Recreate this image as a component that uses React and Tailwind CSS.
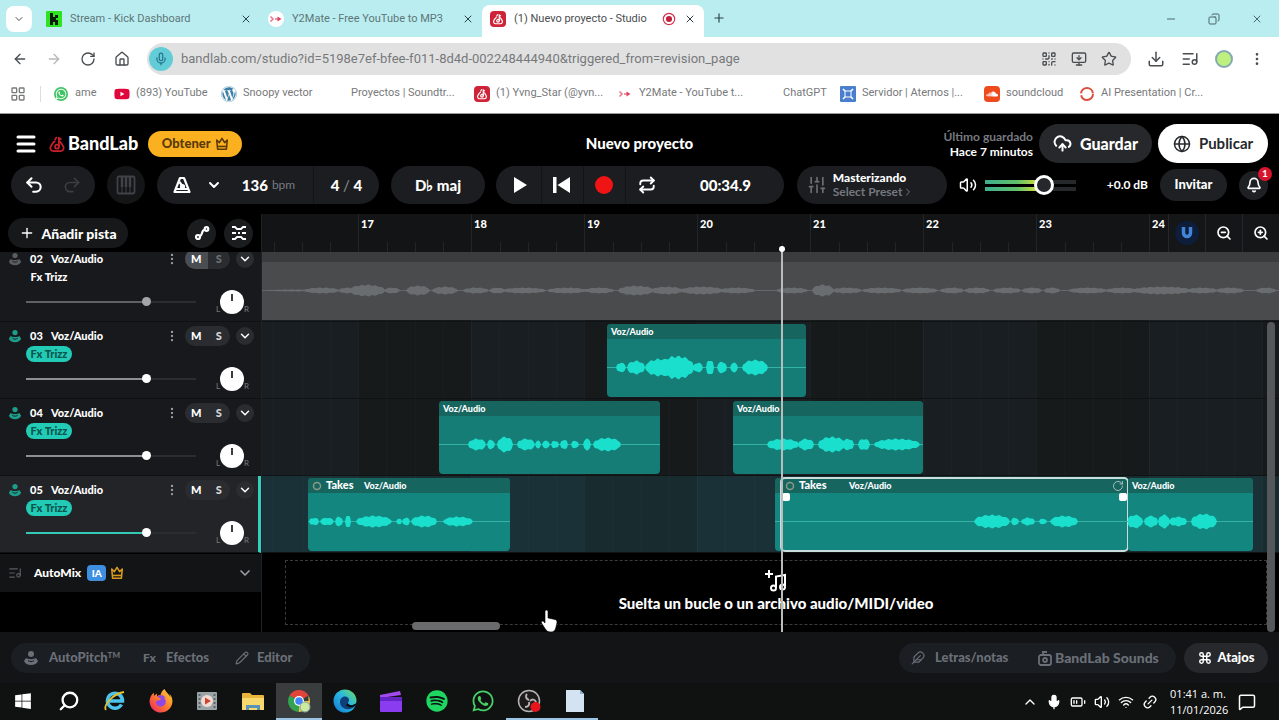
import React, { useState } from "react";
import {
  ArrowLeft, ArrowRight, Bell, ChevronDown, ChevronRight, ChevronUp, CloudUpload, Command, Copy, Download,
  EllipsisVertical, Feather, Globe, House, LayoutGrid, ListMusic, Menu, MessageSquare, Minus, MonitorDown, Pencil,
  Plus, QrCode, Redo2, Repeat, RotateCw, Search, SlidersVertical, Star, Undo2, Volume2, X, ZoomIn, ZoomOut, Mic, Wifi,
  BatteryMedium, Link2,
} from "lucide-react";
import { FaFirefoxBrowser, FaSoundcloud, FaSpotify, FaWhatsapp, FaWindows, FaWordpress, FaYoutube } from "react-icons/fa";

const TABS = [
  { icon: "kick", title: "Stream - Kick Dashboard" },
  { icon: "y2", title: "Y2Mate - Free YouTube to MP3" },
  { icon: "bandlab", title: "(1) Nuevo proyecto - Studio", active: true },
];

const BOOKMARKS = [
  { icon: "whatsapp", label: "ame", width: "w-[61px]" },
  { icon: "youtube", label: "(893) YouTube", width: "w-[107px]" },
  { icon: "wordpress", label: "Snoopy vector", width: "w-[108px]" },
  { icon: "none", label: "Proyectos | Soundtr...", width: "w-[145px]" },
  { icon: "bandlab", label: "(1) Yvng_Star (@yvn...", width: "w-[143px]" },
  { icon: "y2", label: "Y2Mate - YouTube t...", width: "w-[144px]" },
  { icon: "none", label: "ChatGPT", width: "w-[79px]" },
  { icon: "aternos", label: "Servidor | Aternos |...", width: "w-[144px]" },
  { icon: "soundcloud", label: "soundcloud", width: "w-[95px]" },
  { icon: "ai", label: "AI Presentation | Cr...", width: "w-[140px]" },
];

const BARS = [16, 17, 18, 19, 20, 21, 22, 23, 24, 25];

// blobs: [center, half width, amplitude], measured from the left edge of the clip
const TRACKS = [
  { id: "02", muted: true, clips: [] },
  {
    id: "03",
    clips: [
      { left: 345, width: 199, blobs: [[14, 5, 5], [29, 9, 7], [53, 15, 9], [70, 17, 12], [91, 5, 5], [103, 4, 8], [115, 5, 6], [127, 4, 5], [148, 13, 8]] },
    ],
  },
  {
    id: "04",
    clips: [
      { left: 177, width: 221, blobs: [[38, 9, 6], [52, 4, 5], [66, 8, 8], [87, 9, 6], [99, 3, 4], [107, 4, 4], [116, 4, 4], [125, 4, 5], [136, 4, 4], [148, 4, 6], [168, 14, 7]] },
      { left: 471, width: 190, blobs: [[50, 16, 6], [73, 8, 6], [99, 14, 8], [115, 6, 6], [131, 6, 6], [164, 23, 6]] },
    ],
  },
  {
    id: "05",
    selected: true,
    clips: [
      { left: 46, width: 202, takes: true, blobs: [[6, 5, 4], [19, 7, 4], [31, 4, 5], [40, 3, 7], [66, 18, 6], [91, 3, 3], [98, 4, 4], [116, 13, 6], [150, 15, 5]] },
      { left: 513, width: 10, plain: true, blobs: [] },
      { left: 519, width: 347, takes: true, selected: true, blobs: [[211, 18, 7], [234, 4, 4], [247, 7, 4], [262, 4, 3], [283, 14, 6]] },
      { left: 866, width: 125, blobs: [[7, 8, 7], [23, 7, 6], [36, 6, 7], [50, 9, 5], [76, 13, 8]] },
    ],
  },
];

const MUTED_BLOBS = [
  [30, 25, 1], [60, 18, 3], [85, 8, 3], [105, 18, 6], [130, 8, 3], [156, 12, 5], [183, 13, 4], [214, 13, 3],
  [235, 8, 3], [262, 22, 3], [305, 20, 3], [337, 15, 3], [374, 18, 5], [405, 16, 4], [440, 22, 4], [475, 18, 3],
  [530, 16, 3], [561, 11, 6], [585, 15, 3], [620, 20, 3], [658, 18, 3], [690, 12, 3], [715, 13, 3], [745, 14, 3],
  [770, 10, 3], [790, 8, 3], [826, 20, 3], [860, 16, 3], [900, 30, 4], [940, 16, 3], [968, 14, 3], [1004, 10, 3],
];

const wavePath = (blobs, mid) => {
  let d = "";
  blobs.forEach(([cx, hw, amp]) => {
    const top = [];
    const bottom = [];
    for (let x = -hw; x <= hw; x += 1) {
      const env = Math.pow(1 - Math.pow(Math.abs(x) / hw, 2), 0.5);
      const wobble = 0.9 + 0.1 * Math.sin((cx + x) * 0.9);
      const h = amp * env * wobble;
      top.push(`${cx + x},${(mid - h).toFixed(1)}`);
      bottom.unshift(`${cx + x},${(mid + h).toFixed(1)}`);
    }
    d += `M${top.join("L")}L${bottom.join("L")}Z`;
  });
  return d;
};

const BandLabMark = ({ className }) => (
  <svg viewBox="0 0 24 24" className={className} fill="none" stroke="currentColor" strokeWidth="2.4" strokeLinecap="round">
    <path d="M9 8.5c-2.600.9-2.900 3.200-5.300 6.700C2 18.200 4 21.500 7.500 21.500h9c3.500 0 5.500-3.300 3.800-6.300-2.400-3.500-2.700-5.800-5.300-6.700" />
    <circle cx="12" cy="15.500" r="2.600" />
    <path d="M14.500 15V4l2.500 1.500M11 3.500 9.500 6" />
  </svg>
);

const Crown = ({ className }) => (
  <svg viewBox="0 0 16 16" className={className} fill="none" stroke="currentColor" strokeWidth="1.800" strokeLinejoin="round">
    <path d="M2 3.500 5 6.500 8 1.500l3 5 3-3-1 10.500H3z" />
    <path d="M3.500 10.800h9" />
  </svg>
);

const VoiceIcon = ({ className }) => (
  <svg viewBox="0 0 16 16" className={className} fill="currentColor">
    <circle cx="8" cy="4" r="3" />
    <path d="M3 8c2 1.500 8 1.500 10 0l2 3c-1 2.500-3.500 4-7 4s-6-1.500-7-4z" />
    <path d="M5 10.500c2 1.500 4 1.500 6 0" fill="none" stroke="#17191c" />
  </svg>
);

const SiteIcon = ({ name }) => {
  if (name === "kick")
    return (
      <svg viewBox="0 0 16 16" className="size-4 shrink-0">
        <rect width="16" height="16" rx="1" fill="#2fe321" />
        <path d="M4 2h3v4h2V4h3v3h-2v2h2v5H9v-3H7v3H4z" fill="#0b1c08" />
      </svg>
    );
  if (name === "bandlab")
    return (
      <span className="flex size-4 shrink-0 items-center justify-center rounded-sm bg-[#cf2438] text-white">
        <BandLabMark className="size-3" />
      </span>
    );
  if (name === "y2")
    return (
      <span className="flex size-4 shrink-0 items-center justify-center rounded-full bg-white">
        <svg viewBox="0 0 16 16" className="size-4">
          <path d="M2.500 5.500 5 8l-2.500 2.500M7 8h3" stroke="#e8768c" strokeWidth="1.500" fill="none" />
          <path d="m9.500 5.500 4 2.500-4 2.500z" fill="#e0405c" />
        </svg>
      </span>
    );
  if (name === "whatsapp")
    return (
      <span className="flex size-4 shrink-0 items-center justify-center">
        <span className="flex size-3.5 items-center justify-center rounded-full bg-[#3fc463]">
          <FaWhatsapp className="size-3 text-white" />
        </span>
      </span>
    );
  if (name === "youtube") return <FaYoutube className="size-4 shrink-0 text-[#e0083a]" />;
  if (name === "wordpress") return <FaWordpress className="size-4 shrink-0 text-[#3d7fa8]" />;
  if (name === "aternos")
    return (
      <svg viewBox="0 0 16 16" className="size-4 shrink-0">
        <rect width="16" height="16" rx="1" fill="#4a7fd0" />
        <path d="m3 3 10 10M13 3 3 13" stroke="#fff" strokeWidth="1.500" />
        <rect x="5" y="5" width="6" height="6" rx="1" fill="#4a7fd0" stroke="#fff" />
      </svg>
    );
  if (name === "soundcloud")
    return (
      <span className="flex size-4 shrink-0 items-center justify-center rounded-sm bg-[#ee4a1c]">
        <FaSoundcloud className="size-3 text-white" />
      </span>
    );
  if (name === "ai")
    return (
      <svg viewBox="0 0 16 16" className="size-4 shrink-0" fill="none" strokeWidth="2">
        <circle cx="8" cy="8" r="6" stroke="#d9503f" strokeDasharray="17 2" />
      </svg>
    );
  return <span className="size-4 shrink-0" />;
};

const BrowserChrome = () => (
  <div className="bg-white font-['Roboto','Open_Sans',sans-serif] text-[#4a4d50]">
    <div className="flex h-[37px] items-end bg-[#baedf0]">
      <button aria-label="Buscar pestañas" className="mx-1.5 mb-[5px] flex size-[26px] items-center justify-center rounded-lg bg-white">
        <ChevronDown className="size-3" />
      </button>
      {TABS.map((t) => (
        <div
          key={t.title}
          className={`flex h-8 w-[222px] items-center gap-2 rounded-t-lg px-2 pb-1 ${t.active ? "bg-white" : "text-[#5d7679]"}`}
        >
          <SiteIcon name={t.icon} />
          <span className="flex-1 overflow-hidden text-[11px] whitespace-nowrap">{t.title}</span>
          {t.active && (
            <svg viewBox="0 0 16 16" className="size-3.5 shrink-0">
              <circle cx="8" cy="8" r="6.500" fill="none" stroke="#d2344e" strokeWidth="1.300" />
              <circle cx="8" cy="8" r="3.500" fill="#c2203c" />
            </svg>
          )}
          <button aria-label="Cerrar pestaña" className="text-[#2c4144]">
            <X className="size-3" />
          </button>
        </div>
      ))}
      <button aria-label="Nueva pestaña" className="mb-3 ml-2 text-[#2c4144]">
        <Plus className="size-3.5" />
      </button>
      <div className="mr-4 mb-3 ml-auto flex items-center gap-[31px] text-[#4b6669]">
        <button aria-label="Minimizar"><Minus className="size-3" /></button>
        <button aria-label="Restaurar"><Copy className="size-3 -scale-x-100" /></button>
        <button aria-label="Cerrar"><X className="size-3" /></button>
      </div>
    </div>

    <div className="flex h-[43px] items-center pr-3.5 pl-3">
      <div className="flex w-[135px] items-center gap-[18px]">
        <button aria-label="Atrás"><ArrowLeft className="size-4" /></button>
        <button aria-label="Adelante" className="text-[#b6b8ba]"><ArrowRight className="size-4" /></button>
        <button aria-label="Recargar"><RotateCw className="size-4" /></button>
        <button aria-label="Inicio"><House className="size-4" /></button>
      </div>
      <div className="flex h-8 flex-1 items-center rounded-full bg-[#e1e1e2] pr-3.5 pl-0.5">
        <span className="mr-2 flex size-6 items-center justify-center rounded-full bg-[#62cdd6] text-[#246f87]">
          <Mic className="size-3.5" />
        </span>
        <input
          aria-label="Dirección"
          className="min-w-0 flex-1 bg-transparent text-[13px] text-[#77797b] outline-none"
          defaultValue="bandlab.com/studio?id=5198e7ef-bfee-f011-8d4d-002248444940&triggered_from=revision_page"
        />
        <div className="flex items-center gap-3.5">
          <button aria-label="Código QR"><QrCode className="size-4" /></button>
          <button aria-label="Instalar"><MonitorDown className="size-4" /></button>
          <button aria-label="Favorito"><Star className="size-4" /></button>
        </div>
      </div>
      <div className="ml-4 flex items-center gap-4">
        <button aria-label="Descargas"><Download className="size-[18px]" /></button>
        <button aria-label="Multimedia"><ListMusic className="size-[18px]" /></button>
        <button aria-label="Perfil" className="size-[18px] rounded-full border-2 border-[#83a7b4] bg-[#bdf07c]" />
        <button aria-label="Menú"><EllipsisVertical className="size-4" /></button>
      </div>
    </div>

    <nav className="flex h-[34px] items-center overflow-hidden border-b border-[#9a9a9a] pb-1.5 pl-2.5 text-[11px] text-[#77797b]">
      <LayoutGrid className="mr-3.5 size-4 shrink-0" />
      <span className="mr-3 h-4 w-px shrink-0 bg-[#dcdfe0]" />
      {BOOKMARKS.map((b) => (
        <a key={b.label} href="#" className={`flex shrink-0 items-center gap-1.5 whitespace-nowrap ${b.width}`}>
          <SiteIcon name={b.icon} />
          {b.label}
        </a>
      ))}
    </nav>
  </div>
);

const StudioHeader = () => (
  <header className="flex flex-col gap-[3px] bg-black py-2.5">
    <div className="flex h-[39px] items-center px-[11px]">
      <div className="flex flex-1 items-center">
        <button aria-label="Menú principal" className="mr-2.5 ml-[3px]">
          <Menu className="size-6" strokeWidth={3} />
        </button>
        <a href="#" className="mr-2.5 flex items-center gap-0.5 text-[18px] font-black">
          <BandLabMark className="size-[18px] text-[#c8202c]" />
          BandLab
        </a>
        <button className="flex h-[26px] w-[94px] items-center justify-center gap-1 rounded-full bg-[#fbb01f] text-[13px] font-black text-[#5a3a08]">
          Obtener
          <Crown className="size-3.5" />
        </button>
      </div>
      <h1 className="text-[15px] font-black">Nuevo proyecto</h1>
      <div className="flex flex-1 items-center justify-end gap-1.5">
        <div className="text-right text-[12px] leading-[15px] font-bold">
          <div className="text-[#777a80]">Último guardado</div>
          <div>Hace 7 minutos</div>
        </div>
        <button className="flex h-[39px] w-[113px] items-center justify-center gap-2 rounded-full bg-[#26282b] text-[16px] font-black">
          <CloudUpload className="size-[19px]" strokeWidth={2.5} />
          Guardar
        </button>
        <button className="flex h-[39px] w-[110px] items-center justify-center gap-2 rounded-full bg-white text-[15px] font-bold text-[#26282b]">
          <Globe className="size-[18px]" />
          Publicar
        </button>
      </div>
    </div>

    <div className="flex h-[38px] items-center px-[11px]">
      <div className="flex flex-1 items-center gap-3">
        <div className="flex h-[38px] w-[84px] items-center justify-around rounded-full bg-[#1b1d20] px-1">
          <button aria-label="Deshacer"><Undo2 className="size-5" strokeWidth={2.5} /></button>
          <button aria-label="Rehacer" className="text-[#3b3e42]"><Redo2 className="size-5" /></button>
        </div>
        <button aria-label="Teclado" className="flex size-[38px] items-center justify-center rounded-full bg-[#141517] text-[#3f4246]">
          <svg viewBox="0 0 20 20" className="size-5" fill="none" stroke="currentColor" strokeWidth="1.800">
            <rect x="1.500" y="1.500" width="17" height="17" rx="1.500" />
            <path d="M6 2v10M10 2v10M14 2v10" strokeWidth="2.500" />
            <path d="M6 12v6M10 12v6M14 12v6" strokeWidth="1" />
          </svg>
        </button>
        <div className="flex h-[38px] w-[222px] items-center rounded-full bg-[#1b1d20]">
          <button aria-label="Metrónomo" className="flex w-[47px] justify-end pr-3">
            <svg viewBox="0 0 20 20" className="size-5 shrink-0" fill="none" stroke="currentColor" strokeWidth="2.200" strokeLinejoin="round">
              <path d="M8 3h4l5.500 14h-15z" />
              <path d="M4 14h12M11 12 7.500 7" />
              <circle cx="10.500" cy="11.500" r="1.500" />
            </svg>
          </button>
          <button aria-label="Opciones de metrónomo" className="flex w-5 justify-center">
            <ChevronDown className="size-4 shrink-0" strokeWidth={3} />
          </button>
          <div className="flex h-full flex-1 items-center justify-center gap-1 text-[15px] font-black">
            136 <span className="text-[12px] font-normal text-[#777b82]">bpm</span>
          </div>
          <div className="flex h-full w-[66px] items-center justify-center border-l border-[#131416] text-[15px] font-black">
            4&nbsp;<span className="font-normal text-[#8b8e94]">/</span>&nbsp;4
          </div>
        </div>
        <button className="h-[38px] w-[94px] rounded-full bg-[#1b1d20] text-[15px] font-black">D♭ maj</button>
      </div>

      <div className="flex h-[38px] w-[288px] items-center rounded-full bg-[#1b1d20] pl-1">
        <button aria-label="Reproducir" className="flex h-full w-[42px] items-center justify-center border-r border-[#131416]">
          <svg viewBox="0 0 16 16" className="size-4" fill="currentColor"><path d="M2 0v16l13-8z" /></svg>
        </button>
        <button aria-label="Volver al inicio" className="flex h-full w-[42px] items-center justify-center border-r border-[#131416]">
          <svg viewBox="0 0 18 16" className="h-4 w-[18px]" fill="currentColor"><path d="M0 0h3.500v16H0zM17 0v16L4.500 8z" /></svg>
        </button>
        <button aria-label="Grabar" className="flex h-full w-[42px] items-center justify-center border-r border-[#131416]">
          <span className="size-[18px] rounded-full bg-[#f01414]" />
        </button>
        <button aria-label="Repetir" className="flex h-full w-[42px] items-center justify-center">
          <Repeat className="size-[18px]" strokeWidth={2.5} />
        </button>
        <div className="flex-1 text-center text-[15px] font-black">00:34.9</div>
      </div>

      <div className="flex flex-1 items-center justify-end">
        <button className="mr-3 flex h-[38px] w-[150px] items-center gap-1.5 rounded-full bg-[#1b1d20] pl-2.5 text-left text-[12px] leading-[14px] font-bold">
          <SlidersVertical className="size-5 text-[#6b6e74]" />
          <span>
            <span className="block font-black">Masterizando</span>
            <span className="flex items-center text-[#75787e]">Select Preset <ChevronRight className="size-3" /></span>
          </span>
        </button>
        <Volume2 className="mr-2 size-[18px]" />
        <div className="relative mr-[31px] flex h-5 w-[91px] flex-col justify-center gap-[3px]">
          <span className="h-1 w-full bg-[linear-gradient(90deg,#3fae8d_0%,#5fc06a_35%,#d9e23a_60%,#26282b_62%)]" />
          <span className="h-1 w-full bg-[linear-gradient(90deg,#3fae8d_0%,#5fc06a_35%,#d9e23a_60%,#26282b_62%)]" />
          <input
            type="range"
            aria-label="Volumen principal"
            defaultValue="69"
            className="absolute inset-0 appearance-none bg-transparent [&::-webkit-slider-thumb]:size-5 [&::-webkit-slider-thumb]:appearance-none [&::-webkit-slider-thumb]:rounded-full [&::-webkit-slider-thumb]:border-3 [&::-webkit-slider-thumb]:border-white [&::-webkit-slider-thumb]:bg-[#26282b]"
          />
        </div>
        <span className="mr-3 text-[12px] font-bold">+0.0 dB</span>
        <button className="mr-3 h-8 w-[67px] rounded-full bg-[#1e2023] text-[13px] font-black">Invitar</button>
        <button aria-label="Notificaciones" className="relative flex size-[29px] items-center justify-center rounded-full bg-[#1e2023]">
          <Bell className="size-4" strokeWidth={2.5} />
          <span className="absolute -top-1 -right-1 flex size-[14px] items-center justify-center rounded-full bg-[#d8152c] text-[10px] font-bold">1</span>
        </button>
      </div>
    </div>
  </header>
);

const TrackHeader = ({ track }) => {
  const [volume, setVolume] = useState(72);
  const { id, muted, selected } = track;
  const fill = selected ? "#35c9b5" : muted ? "#5f6265" : "#8d9093";

  return (
    <div className={`flex h-[77px] w-full shrink-0 flex-col border-b border-[#0f1011] pt-1 ${selected ? "border-r-3 border-r-[#35d0bd] bg-[#222427]" : "bg-[#17191c]"}`}>
      <div className="flex h-5 items-center pl-2 text-[11px] font-black">
        <VoiceIcon className={`mr-2 size-3.5 ${muted ? "text-[#5a5d60]" : "text-[#1f9d8c]"}`} />
        <span className="w-[21px]">{id}</span>
        <span className="w-[114px]">Voz/Audio</span>
        <button aria-label={`Opciones de pista ${id}`} className="mr-1.5 text-[#9a9da0]">
          <EllipsisVertical className="size-3.5" />
        </button>
        <div className="mr-1.5 flex h-5 w-[45px] overflow-hidden rounded-full bg-[#2a2c30]">
          <button aria-label={`Silenciar pista ${id}`} className={`flex-1 ${muted ? "bg-[#4a4d52]" : ""}`}>M</button>
          <button aria-label={`Solo pista ${id}`} className={`flex-1 ${muted ? "text-[#6d7075]" : "text-[#d4d6d8]"}`}>S</button>
        </div>
        <button aria-label={`Expandir pista ${id}`} className="flex size-[18px] items-center justify-center rounded-full bg-[#2a2c30]">
          <ChevronDown className="size-3.5" strokeWidth={2.5} />
        </button>
      </div>
      <button
        className={`ml-[26px] h-4 w-[46px] rounded-full text-[11px] leading-4 font-black ${muted ? "text-white" : "bg-[#21cbb5] text-[#0d544b]"}`}
      >
        Fx Trizz
      </button>
      <div className="flex h-[33px] items-center pl-[26px]">
        <input
          type="range"
          aria-label={`Volumen de pista ${id}`}
          value={volume}
          onChange={(e) => setVolume(Number(e.target.value))}
          style={{ backgroundImage: `linear-gradient(90deg, ${fill} ${volume}%, #2b2d30 ${volume}%)` }}
          className={`mr-5 h-3 w-[170px] appearance-none bg-[length:100%_2px] bg-center bg-no-repeat [&::-webkit-slider-thumb]:size-[9px] [&::-webkit-slider-thumb]:appearance-none [&::-webkit-slider-thumb]:rounded-full ${muted ? "[&::-webkit-slider-thumb]:bg-[#a3a5a7]" : "[&::-webkit-slider-thumb]:bg-white"}`}
        />
        <div className="flex items-end text-[8px] leading-[10px] text-[#77797c]">
          <span className="w-1">L</span>
          <button aria-label={`Panorama de pista ${id}`} className="flex size-6 justify-center rounded-full bg-white pt-1">
            <span className="h-[7px] w-0.5 bg-[#3a3c3e]" />
          </button>
          <span>R</span>
        </div>
      </div>
    </div>
  );
};

// Bars are 113px wide, the view starts 17px into bar 16
const Grid = () => (
  <div className="absolute inset-0 -ml-[17px] flex overflow-hidden">
    {BARS.map((bar) => (
      <div key={bar} className={`grid w-[113px] shrink-0 grid-cols-4 ${bar % 2 ? "bg-[#00000012]" : "bg-[#20406014]"}`}>
        {[0, 1, 2, 3].map((beat) => (
          <span key={beat} className={`border-l ${beat ? "border-[#ffffff05]" : "border-[#ffffff08]"}`} />
        ))}
      </div>
    ))}
  </div>
);

const Ruler = () => (
  <div className="flex h-[38px] bg-[#121415]">
    <div className="flex min-w-0 flex-1 overflow-hidden">
      <div className="-ml-[17px] flex">
        {BARS.slice(0, 9).map((bar, i) => (
          <div key={bar} className="flex w-[113px] shrink-0 flex-col justify-between border-l border-[#222426]">
            <span className="h-5 pt-0.5 pl-0.5 text-[11px] leading-4 font-black">{i > 0 && bar}</span>
            <div className="grid h-2.5 grid-cols-4">
              {[0, 1, 2, 3].map((beat) => (
                <span key={beat} className={`border-l ${beat ? "border-[#222426]" : "border-transparent"}`} />
              ))}
            </div>
          </div>
        ))}
      </div>
    </div>
    {[
      { label: "Ajustar a la cuadrícula", icon: "snap" },
      { label: "Alejar", icon: "out" },
      { label: "Acercar", icon: "in" },
    ].map((c) => (
      <button key={c.icon} aria-label={c.label} className="flex w-[37px] shrink-0 items-center justify-center border-l border-[#25272a] bg-[#151617]">
        {c.icon === "snap" && (
          <span className="flex size-6 items-center justify-center rounded-full bg-[#0d1d3a]">
            <svg viewBox="0 0 14 14" className="size-3.5" fill="none" stroke="#4285d6" strokeWidth="3.500">
              <path d="M3.500 1v6a3.500 3.500 0 0 0 7 0V1" />
            </svg>
          </span>
        )}
        {c.icon === "out" && <ZoomOut className="size-4" strokeWidth={2.5} />}
        {c.icon === "in" && <ZoomIn className="size-4" strokeWidth={2.5} />}
      </button>
    ))}
  </div>
);

const Clip = ({ clip, active }) => (
  <div
    className={`absolute top-0.5 h-[73px] overflow-hidden rounded-sm ${active ? "bg-[#13877f]" : "bg-[#157c76]"} ${clip.selected ? "outline-2 -outline-offset-1 outline-[#c9dedb]" : ""}`}
    style={{ left: clip.left, width: clip.width }}
  >
    <div className="flex h-[15px] items-center bg-[#16655f] pl-1 text-[9px] font-black">
      {clip.takes && (
        <>
          <svg viewBox="0 0 10 10" className="mr-1 size-2.5" fill="none" stroke="#8a9a86" strokeWidth="1.500">
            <circle cx="5" cy="5" r="3.500" />
          </svg>
          <span className={`text-[11px] ${clip.selected ? "w-[50px]" : "w-[38px]"}`}>Takes</span>
        </>
      )}
      {!clip.plain && <span>Voz/Audio</span>}
      {clip.selected && <RotateCw className="mr-1 ml-auto size-3 text-[#a5bdb9]" />}
    </div>
    {clip.selected && (
      <div className="flex justify-between px-px">
        <span className="size-2 rounded-xs bg-white" />
        <span className="size-2 rounded-xs bg-white" />
      </div>
    )}
    <svg width={clip.width} height="73" className="absolute top-0 left-0">
      <path d={`M0 43.500H${clip.width}`} stroke="#32b3a6" />
      <path d={wavePath(clip.blobs, 43.5)} fill="#1adfcd" />
    </svg>
  </div>
);

const Lane = ({ track }) => (
  <div className={`relative h-[77px] w-full shrink-0 overflow-hidden border-b border-[#101213] ${track.selected ? "bg-[#1a3033]" : "bg-[#181c1d]"}`}>
    <Grid />
    {track.muted && (
      <div className="absolute inset-x-0 top-0.5 h-[73px] bg-[#494b4d]">
        <div className="h-[15px] bg-[#3b3c3e]" />
        <svg width="100%" height="73" className="absolute top-0 left-0">
          <path d="M0 43.500H3000" stroke="#646769" />
          <path d={wavePath(MUTED_BLOBS, 43.5)} fill="#6a6d6f" />
        </svg>
      </div>
    )}
    {track.clips.map((clip) => (
      <Clip key={clip.left} clip={clip} active={track.selected} />
    ))}
  </div>
);

const Editor = () => (
  <main className="flex flex-1 bg-black">
    <aside className="flex w-[262px] shrink-0 flex-col border-r border-[#1f2123]">
      <div className="flex h-[38px] items-center gap-2 pr-2 pl-2">
        <button className="mr-auto flex h-[30px] w-[120px] items-center justify-center gap-1.5 rounded-full bg-[#17181a] text-[14px] font-black">
          <Plus className="size-4" />
          Añadir pista
        </button>
        <button aria-label="Automatización" className="flex size-[29px] items-center justify-center rounded-full bg-[#1b1c1e]">
          <svg viewBox="0 0 16 16" className="size-4" fill="none" stroke="currentColor" strokeWidth="2.200">
            <circle cx="4" cy="12" r="2" />
            <circle cx="12.500" cy="4" r="1.800" />
            <path d="M6 11c3-1 1-6 5-6.500" />
          </svg>
        </button>
        <button aria-label="Contraer pistas" className="flex size-[29px] items-center justify-center rounded-full bg-[#1b1c1e]">
          <svg viewBox="0 0 16 16" className="size-4" fill="none" stroke="currentColor" strokeWidth="1.800">
            <path d="M1 2h3l2 2h4l2-2h3M1 14h3l2-2h4l2 2h3M1 8h4M11 8h4M7 8h2" />
          </svg>
        </button>
      </div>
      <div className="flex h-[70px] items-end overflow-hidden">
        <TrackHeader track={TRACKS[0]} />
      </div>
      {TRACKS.slice(1).map((t) => (
        <TrackHeader key={t.id} track={t} />
      ))}
      <div className="mt-px flex h-[38px] items-center bg-[#131416] pr-2 pl-2">
        <ListMusic className="mr-3 size-3.5 text-[#595c60]" />
        <span className="mr-1.5 text-[12px] font-black">AutoMix</span>
        <span className="mr-1 flex h-4 w-[19px] items-center justify-center rounded-sm bg-[#3f8fe0] text-[10px] font-black">IA</span>
        <Crown className="size-3.5 text-[#d79a1e]" />
        <button aria-label="Expandir AutoMix" className="ml-auto text-[#9a9da0]">
          <ChevronDown className="size-4" strokeWidth={2.5} />
        </button>
      </div>
    </aside>

    <section className="relative flex min-w-0 flex-1 flex-col">
      <Ruler />
      <div className="flex h-[70px] items-end overflow-hidden">
        <Lane track={TRACKS[0]} />
      </div>
      {TRACKS.slice(1).map((t) => (
        <Lane key={t.id} track={t} />
      ))}
      <div className="mt-[7px] mr-3 mb-[7px] ml-[23px] flex h-[65px] flex-col items-center justify-center border border-dashed border-[#3a3b3d] pb-1 text-[15px] font-black">
        <svg viewBox="0 0 24 24" className="size-6" fill="none" stroke="currentColor" strokeWidth="2">
          <path d="M1 5h8M5 1v8M12 18V7.500l9-1.500v11" />
          <circle cx="9.500" cy="19" r="2.500" />
          <circle cx="18.500" cy="18" r="2.500" />
        </svg>
        <span className="leading-5">Suelta un bucle o un archivo audio/MIDI/video</span>
      </div>
      <div className="absolute bottom-0.5 left-[150px] h-2 w-[88px] rounded-full bg-[#6a6b6c]" />
      <div className="absolute right-1 top-[108px] bottom-0 w-2 rounded-full bg-[#55585a]" />
      <div className="absolute top-8 bottom-0 left-[519px] flex w-0.5 justify-center bg-[#b9bcbd]">
        <span className="size-1.5 shrink-0 rounded-full bg-white" />
      </div>
      <svg viewBox="0 0 18 24" className="absolute -bottom-px left-[278px] h-6 w-[18px]" fill="#fff" stroke="#000" strokeWidth="0.600">
        <path d="M5 2.500a1.500 1.500 0 0 1 3 0V9l7 1.500c1.500.4 2 1.500 2 3L16 18c-.5 3-2 5-5 5s-4.500-1-6-3.500L1.500 14c-.5-1.500 1-2.500 2-1.500L5 14z" />
      </svg>
    </section>
  </main>
);

const BottomBar = () => (
  <div className="flex h-[51px] items-center bg-[#121416] px-[11px] text-[13px] font-black text-[#6a6f78]">
    <div className="flex h-[30px] items-center rounded-full bg-[#1b1e22]">
      <button className="flex w-[122px] items-center gap-2.5 pl-3">
        <VoiceIcon className="size-4" />
        <span>AutoPitch<sup className="text-[8px]">TM</sup></span>
      </button>
      <button className="flex w-[90px] items-center gap-2.5 pl-2.5">
        <span className="text-[12px]">Fx</span>Efectos
      </button>
      <button className="flex w-[87px] items-center gap-2 pl-3">
        <Pencil className="size-3.5" />Editor
      </button>
    </div>
    <div className="ml-auto flex h-[30px] items-center rounded-full bg-[#1b1e22]">
      <button className="flex w-[130px] items-center gap-2.5 pl-3">
        <Feather className="size-3.5" />Letras/notas
      </button>
      <button className="flex w-[147px] items-center gap-0.5 pl-2 text-[14px] whitespace-nowrap">
        <svg viewBox="0 0 16 16" className="size-4" fill="none" stroke="currentColor" strokeWidth="1.800">
          <path d="M2 7c0-1 1-2 2-2h8c1 0 2 1 2 2v6c0 1-1 2-2 2H4c-1 0-2-1-2-2zM6 5V2h4" />
          <circle cx="8" cy="10" r="2" />
        </svg>
        BandLab Sounds
      </button>
    </div>
    <button className="ml-2 flex h-[30px] w-[84px] items-center justify-center gap-1.5 rounded-full bg-[#26282b] text-white">
      <Command className="size-3.5" strokeWidth={2.5} />Atajos
    </button>
  </div>
);

const AppIcon = ({ name }) => {
  switch (name) {
    case "windows": return <FaWindows className="size-[18px] text-white" />;
    case "search": return <Search className="size-[22px] -scale-x-100 text-white" strokeWidth={2.5} />;
    case "ie":
      return (
        <svg viewBox="0 0 24 24" className="size-6">
          <path d="M18.500 15.500A7.500 7.500 0 1 1 19.500 12H6" fill="none" stroke="#4cc3ea" strokeWidth="3.500" />
          <path d="M3 21C0 17 9 5 21 3" fill="none" stroke="#e6c02f" strokeWidth="1.800" />
        </svg>
      );
    case "firefox":
      return (
        <svg viewBox="0 0 24 24" className="size-6">
          <defs>
            <linearGradient id="ff" x1="1" y1="0" x2="0" y2="1">
              <stop offset="0" stopColor="#ffd93b" />
              <stop offset="0.500" stopColor="#ff7a2a" />
              <stop offset="1" stopColor="#e8206c" />
            </linearGradient>
          </defs>
          <circle cx="12" cy="13" r="7" fill="#9047e8" />
          <FaFirefoxBrowser size={24} fill="url(#ff)" />
        </svg>
      );
    case "player":
      return (
        <svg viewBox="0 0 22 20" className="h-5 w-[22px]">
          <rect x="1" y="1" width="20" height="18" rx="1" fill="#9ba5a8" />
          <path d="M3.500 3v14M18.500 3v14" stroke="#59666c" strokeWidth="2" strokeDasharray="2 2" />
          <circle cx="11" cy="10" r="6" fill="#f2dcd6" />
          <path d="m9 6.500 6 3.500-6 3.500z" fill="#d1432c" />
        </svg>
      );
    case "folder":
      return (
        <svg viewBox="0 0 22 18" className="h-[18px] w-[22px]">
          <path d="M0 2q0-1 1-1h7l2 2h11q1 0 1 1v13H0z" fill="#e9b53c" />
          <path d="M0 6h22v12H0z" fill="#f8d96e" />
          <path d="M4 18v-5h14v5h-3v-2H7v2z" fill="#5b92b8" />
        </svg>
      );
    case "chrome":
      return (
        <svg viewBox="0 0 24 24" className="size-6">
          <path d="M12 12 2.500 6.500a11 11 0 0 1 19 0z" fill="#e0443a" />
          <path d="M12 12 2.500 6.500A11 11 0 0 0 12 23z" fill="#32a350" />
          <path d="M12 12h9.500V6.500A11 11 0 0 1 12 23z" fill="#f6c73a" />
          <circle cx="12" cy="12" r="5" fill="#fff" />
          <circle cx="12" cy="12" r="3.800" fill="#4285f4" />
          <circle cx="18" cy="18" r="5" fill="#cdeaa0" stroke="#7fa7a8" />
        </svg>
      );
    case "edge":
      return (
        <svg viewBox="0 0 24 24" className="size-6">
          <defs>
            <linearGradient id="edge" x1="0" y1="1" x2="1" y2="0">
              <stop offset="0" stopColor="#1377d2" />
              <stop offset="0.550" stopColor="#2bb8e0" />
              <stop offset="1" stopColor="#6fe05a" />
            </linearGradient>
          </defs>
          <circle cx="12" cy="12" r="11.500" fill="url(#edge)" />
          <path d="M24 13c-2 4-9 4-9 1 0-1 1-1 1-3 0-2-2-3.500-4-3.500-3 0-5 2.500-5 5.500 0 5 5 8 10 7 3-.8 5-2.500 7-5z" fill="#0e3f78" />
          <path d="M24 13c-2 4-9 4-9 1l-2 2c2 3 8 3 11-1z" fill="#0d1012" />
        </svg>
      );
    case "clips":
      return (
        <svg viewBox="0 0 24 24" className="size-6">
          <path d="m1 6 20-4 1 4-21 3z" fill="#a24af0" />
          <path d="M1 8h22v14q0 1-1 1H2q-1 0-1-1z" fill="#8a3cf0" />
          <path d="M1 8h22v4H1z" fill="#6524c4" />
        </svg>
      );
    case "spotify": return <FaSpotify className="size-[22px] text-[#1ed760]" />;
    case "whatsapp": return <FaWhatsapp className="size-6 text-[#46d268]" />;
    case "obs":
      return (
        <svg viewBox="0 0 24 24" className="size-6">
          <circle cx="12" cy="12" r="10.500" fill="#1d1a1c" stroke="#b9b3b5" strokeWidth="1.500" />
          <path d="M12 11c-3-1-4-4-2-6M12 13c1 3-1 5-4 5M13 12c2-2 5-2 6 1" stroke="#b9b3b5" strokeWidth="2" fill="none" />
          <circle cx="18.500" cy="18" r="5" fill="#e8141c" />
        </svg>
      );
    default:
      return (
        <svg viewBox="0 0 18 22" className="h-[22px] w-[18px]">
          <path d="M0 0h14l4 4v18H0z" fill="#d3e3f2" />
          <path d="M14 0v4h4z" fill="#8fb0cc" />
        </svg>
      );
  }
};

const TASKBAR = [
  { id: "windows" }, { id: "search" }, { id: "ie" }, { id: "firefox" }, { id: "player" }, { id: "folder" },
  { id: "chrome", focused: true }, { id: "edge" }, { id: "clips" }, { id: "spotify" }, { id: "whatsapp" },
  { id: "obs", open: true }, { id: "notepad", open: true },
];

const Taskbar = () => (
  <footer className="flex h-[37px] items-center bg-[#101111] font-['Open_Sans',sans-serif] text-white">
    {TASKBAR.map((a) => (
      <button
        key={a.id}
        aria-label={a.id}
        className={`flex h-full w-[46px] items-center justify-center border-b-2 ${a.focused ? "border-[#9cc4e4] bg-[#3a3d3e]" : a.open ? "border-[#9cc4e4]" : "border-transparent"}`}
      >
        <AppIcon name={a.id} />
      </button>
    ))}
    <div className="mr-[23px] ml-auto flex items-center gap-2">
      <ChevronUp className="size-4" />
      <Mic className="size-4" fill="currentColor" />
      <BatteryMedium className="size-4" />
      <Volume2 className="size-4" />
      <Wifi className="size-4" />
      <Link2 className="size-4 -rotate-45" />
      <div className="mx-1 w-14 text-center text-[11px] leading-4 whitespace-nowrap">
        <div>01:41 a. m.</div>
        <div>11/01/2026</div>
      </div>
      <MessageSquare className="size-[18px]" />
    </div>
  </footer>
);

export default function App() {
  return (
    <div className="flex min-h-screen flex-col overflow-hidden bg-black font-['Lato','Liberation_Sans',sans-serif] text-white">
      <BrowserChrome />
      <StudioHeader />
      <Editor />
      <BottomBar />
      <Taskbar />
    </div>
  );
}
